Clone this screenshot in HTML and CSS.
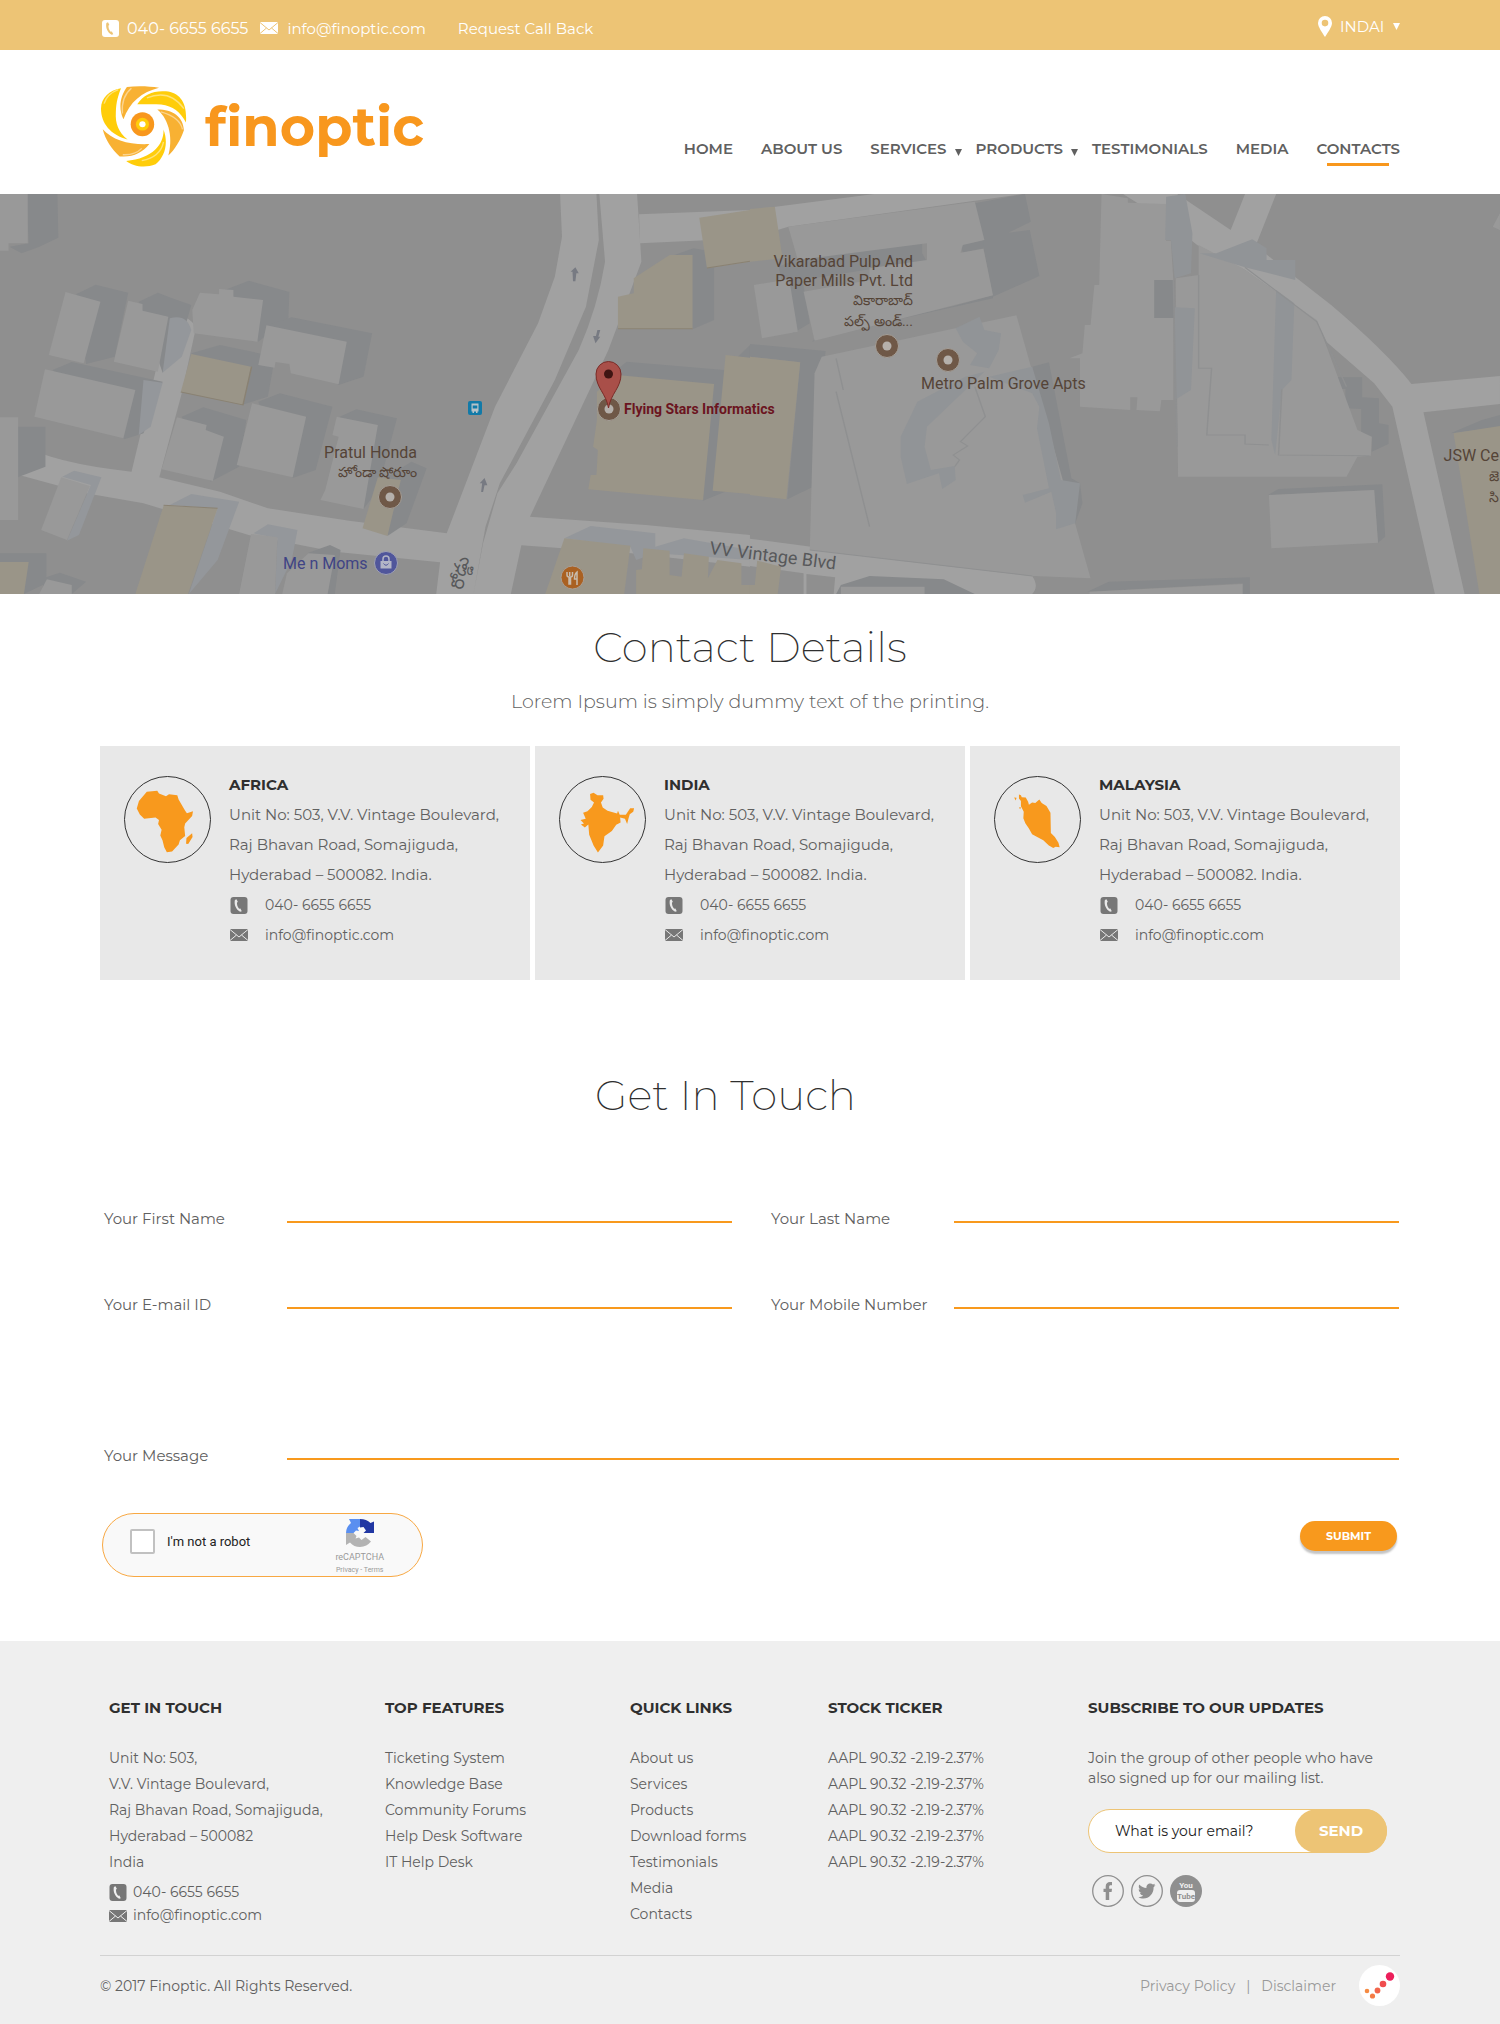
FILE: index.html
```html
<!DOCTYPE html>
<html lang="en">
<head>
<meta charset="utf-8">
<meta name="viewport" content="width=device-width, initial-scale=1">
<title>Finoptic - Contacts</title>
<link rel="stylesheet" href="styles.css">
</head>
<body>
<svg class="sprite" aria-hidden="true">
  <symbol id="phone" viewBox="0 0 17 17">
    <rect width="17" height="17" rx="3" fill="currentColor"/>
    <path d="M6 2.200 4.400 3.100C3.300 7.500 5.600 13 9.600 14.800L11.300 14.200 9.900 11.400 8.600 11.700C7 10 6.300 7.600 6.500 5.500L7.400 5Z" class="cut"/>
  </symbol>
  <symbol id="mail" viewBox="0 0 18 12" preserveAspectRatio="none">
    <rect width="18" height="12" fill="currentColor"/>
    <path d="M0 .5 9 8 18 .5M0 11.500 6.500 6M18 11.500 11.500 6" fill="none" class="cut-line"/>
  </symbol>
</svg>

<div class="topbar">
  <div class="wrap topbar-row">
    <a class="top-link phone" href="tel:04066556655"><svg class="ico-phone"><use href="#phone"/></svg>040- 6655 6655</a>
    <a class="top-link mail" href="mailto:info@finoptic.com"><svg class="ico-mail"><use href="#mail"/></svg>info@finoptic.com</a>
    <a class="top-link callback" href="#form">Request Call Back</a>
    <label class="region">
      <svg class="ico-pin" viewBox="0 0 14 21" aria-hidden="true"><path fill="#fff" fill-rule="evenodd" d="M7 0a7 7 0 0 1 7 7c0 4-4 9-7 14C4 16 0 11 0 7a7 7 0 0 1 7-7Zm0 3.800a3.300 3.300 0 1 0 0 6.600 3.300 3.300 0 0 0 0-6.600Z"/></svg>
      <select aria-label="Region"><option>INDAI</option></select>
      <svg class="caret" viewBox="0 0 7 7" aria-hidden="true"><path d="M0 0h7L3.500 7Z" fill="currentColor"/></svg>
    </label>
  </div>
</div>

<header class="wrap header">
  <a class="brand" href="#">
    <svg class="brand-mark" viewBox="62 257 249 244" preserveAspectRatio="none" aria-hidden="true">
      <g fill="#ffcd0a">
        <path d="M120 264C85 271 63 292 62 325C62 370 90 405 139 418C112 395 103 370 105 335C106 305 112 285 120 264Z"/>
        <path d="M167 312C185 282 215 270 250 273C290 278 312 305 308 367C292 335 270 318 236 313C210 311 190 313 167 312Z"/>
        <path d="M243 388C245 430 215 475 135 483C155 500 190 505 220 493C247 470 258 430 243 388Z"/>
      </g>
      <g fill="#f8b133">
        <path d="M137 260C165 256 200 257 230 262C180 275 145 305 127 357C110 320 120 285 137 260Z"/>
        <path d="M225 328C270 328 300 350 302 390C292 420 275 450 257 466C270 420 262 360 225 328Z"/>
        <path d="M67 387C95 420 145 435 202 432C180 460 155 472 116 469C92 445 75 420 67 387Z"/>
      </g>
      <g fill="none" stroke="#fff" stroke-opacity=".45" stroke-width="4">
        <path d="M71 310Q80 280 112 268M124 340Q120 290 150 264M195 293Q260 265 302 325M235 335Q290 350 298 388M125 464Q160 466 180 445M180 482Q235 470 243 425"/>
      </g>
      <ellipse cx="182" cy="372" rx="34" ry="36" fill="#f8971d"/>
      <ellipse cx="182" cy="372" rx="19" ry="19" fill="#ffcd0a"/>
      <ellipse cx="182" cy="372" rx="9" ry="9" fill="#fff"/>
    </svg>
    <span class="brand-name">finoptic</span>
  </a>
  <nav class="nav">
    <a href="#">HOME</a>
    <a href="#">ABOUT US</a>
    <a href="#" class="has-menu">SERVICES<svg class="caret" viewBox="0 0 7 7"><path d="M0 0h7L3.500 7Z" fill="currentColor"/></svg></a>
    <a href="#" class="has-menu">PRODUCTS<svg class="caret" viewBox="0 0 7 7"><path d="M0 0h7L3.500 7Z" fill="currentColor"/></svg></a>
    <a href="#">TESTIMONIALS</a>
    <a href="#">MEDIA</a>
    <a href="#" class="active">CONTACTS</a>
  </nav>
</header>

<svg class="map" viewBox="0 0 1500 400" preserveAspectRatio="xMidYMid slice" role="img" aria-label="Map of the office location">
  <rect width="1500" height="400" fill="#8f8f8f"/>
  <g transform="scale(.4783 .3333) translate(0 -12)">
    <g fill="#a1a1a1">
      <path d="M1171 12H1332L1341 215L1272 480L1108 980L1350 1005L1568 1035V1130L1320 1090L1090 1066L1068 1212H912L920 1117L700 1085L520 1035L300 940L180 910L40 855V760Q110 820 275 845L325 545L355 400Q380 355 410 410L380 610L333 862L460 905L560 955L730 992L934 1030L1035 650L1125 400L1160 260L1175 140Z"/>
      <path d="M1336 73L1568 60V145L1338 160Z"/>
    </g>
    <path d="M1247 12H1253L1265 215Q1250 350 1210 480L1080 820L1040 910L1010 1060L990 1212L1015 1010L1045 880L1160 570L1225 350L1252 150Z" fill="#8f8f8f"/>
    <g fill="#87898b">
      <path d="M55 12H120L122 143L80 172L45 190L20 170L60 160Z"/>
      <path d="M160 312L200 284L268 308L240 500L180 522Z"/>
      <path d="M290 335L330 308L360 325L400 345L375 470L340 548Z"/>
      <path d="M470 300L520 272L605 306L603 385L540 455Z"/>
      <path d="M560 405L610 382L778 430L760 560L708 585Z"/>
      <path d="M110 540L150 516L340 575L300 730L260 748Z"/>
      <path d="M400 490L460 465L575 500L560 620L505 645Z"/>
      <path d="M540 635L585 610L695 650L660 840L612 864Z"/>
      <path d="M380 680L425 652L515 690L500 830L440 875Z"/>
      <path d="M710 680L745 658L830 685L790 900L760 957Z"/>
      <path d="M810 860L860 815L892 835L850 1000L810 1038Z"/>
      <path d="M1285 545L1310 515L1515 540L1568 465V540L1525 900L1470 932Z"/>
      <path d="M1410 195L1450 175L1493 185V390L1448 418Z"/>
      <path d="M0 1090H97V1180L50 1212H0ZM90 1165L125 1148L180 1175L150 1212H90Z"/>
      <path d="M645 1088L690 1065L712 1080L700 1212H650Z"/>
      <path d="M0 710H95V830L40 860L0 890Z"/>
    </g>
    <g fill="#94979b">
      <path d="M130 860L155 842L212 862L165 1035L140 1052L190 885Z"/>
      <path d="M355 945L400 912L500 935L455 1110L395 1212L455 955Z"/>
      <path d="M530 1030L560 1003L622 1020L610 1110L575 1212L580 1045Z"/>
      <path d="M1180 1045L1235 1008L1370 1030V1070L1430 1045L1568 1080V1110L1370 1090L1330 1110L1318 1070Z"/>
      <path d="M355 385Q390 370 400 420L380 500L340 548Z"/>
      <path d="M300 570L340 578L315 710L290 735Z"/>
    </g>
    <g fill="#999">
      <path d="M0 12H58V160H18V182H0ZM0 682H38V990H0Z"/>
      <path d="M137 306L210 335L175 520L102 495Z"/>
      <path d="M268 332L298 342V362L352 380L330 545L238 515Z"/>
      <path d="M418 308L458 313V297L488 300V320L550 330L538 455L405 430L402 360Z"/>
      <path d="M557 406L725 455L708 583L608 550L605 522L576 516L574 533L540 525Z"/>
      <path d="M94 538L283 600L258 745L72 680Z"/>
      <path d="M370 682L432 705L430 720L468 740L445 873L338 838Z"/>
      <path d="M527 640L640 680L612 862L495 825Z"/>
      <path d="M704 680L790 705L760 957L670 930L680 900L708 740L695 735Z"/>
      <path d="M128 862L188 888L140 1050L86 1020Z"/>
      <path d="M525 1032L580 1042L575 1212H500Z"/>
      <path d="M645 1090L700 1095L685 1212H590L600 1150Z"/>
      <path d="M98 1168L150 1185V1212H82Z"/>
    </g>
    <g fill="#9a9588">
      <path d="M400 492L525 530L508 645L378 605Z"/>
      <path d="M342 947L455 955L393 1212H283Z"/>
      <path d="M790 862L838 870L810 1038L758 1015Z"/>
      <path d="M0 1116H60L50 1212H0Z"/>
      <path d="M1400 195H1448V417H1292V320L1325 310V265Z"/>
      <path d="M1462 83L1568 60V215L1478 235Z"/>
      <path d="M1290 555L1493 582L1470 930L1230 898L1235 855H1247L1250 780L1240 770L1248 690V605Z"/>
      <path d="M1517 495L1568 503V912L1490 902Z"/>
      <path d="M1180 1045L1318 1067L1305 1212H1140Z"/>
      <path d="M1345 1075L1400 1082V1155L1425 1160L1430 1090L1482 1100L1480 1165L1500 1110L1550 1120V1185H1568V1212H1330V1140L1342 1138Z"/>
    </g>
    <path d="M1292 416H1448M1478 234L1568 214M378 606L508 645L526 530M342 946L455 955" fill="none" stroke="#8a8273" stroke-width="3"/>
    <g fill="#777a82">
      <path d="M1198 274L1197 245H1193L1203 232L1210 250H1205L1203 274Z"/>
      <path d="M1249 420L1246 438H1240L1245 460L1255 440H1251L1255 420Z"/>
      <path d="M1006 906L1008 880H1003L1013 864L1019 886H1013L1010 906Z"/>
    </g>
  </g>
  <g transform="translate(750) scale(.4783 .3333) translate(0 -12)">
    <g fill="#a1a1a1">
      <path d="M0 60L260 12H570L80 110L0 145Z"/>
      <path d="M780 12H893L1005 120L1035 12H1100L1057 168L1215 345Q1330 485 1383 582L1568 558V642L1408 667L1494 1212H1432L1343 650L1305 580L1205 455L1185 395L1035 240L935 165L877 100Z"/>
      <path d="M0 1046L590 1158Q605 1190 590 1212H175L178 1162L118 1152V1212H112V1150L0 1128Z"/>
    </g>
    <g fill="#87898b">
      <path d="M470 40L575 12L587 95L540 128L585 120L605 258L508 320Z"/>
      <path d="M60 230L110 200L360 160V190L370 215L240 240L110 270L125 400L90 430Z"/>
      <path d="M440 165L488 150V175L445 188Z"/>
      <path d="M130 455L140 440L420 350L508 316V325L180 430Z"/>
      <path d="M0 462L158 483L130 892L78 928L105 517L0 500Z"/>
      <path d="M843 270H887V384H843Z"/>
      <path d="M1465 730L1530 690L1568 675V710Z"/>
      <path d="M1083 915L1105 897L1322 883L1328 1040L1313 1058L1305 900Z"/>
      <path d="M1112 598L1150 562H1280V622L1315 625V700L1335 705V762L1300 785V740L1278 738V657L1245 655V597Z"/>
      <path d="M180 1212L190 1185L250 1158L405 1168L470 1212ZM705 1205L750 1175L1045 1162V1212H1030V1180Z"/>
      <path d="M590 530L625 517L672 865L690 880L695 940L680 1000L640 1018L650 900Z"/>
    </g>
    <g fill="#999">
      <path d="M80 110L470 35L490 150L445 165L440 188L488 176L508 316L135 452L112 305L250 270V235L370 210V160L100 210Z"/>
      <path d="M8 285L82 268L100 425L25 445Z"/>
      <path d="M150 500L557 376L712 1165L580 1157L125 1080L135 550Z"/>
      <path d="M735 12L790 25V38L870 42V152H880L885 270H845V384H885V630H860L857 664L808 660L810 622L795 622V660L690 650V505H668L695 490L700 405H712L720 285H730Z"/>
      <path d="M890 265L938 255V165L1030 235L1185 390L1270 720L1300 740L1298 797L1270 800L1247 860H895Z"/>
      <path d="M1085 915L1305 900L1313 1058L1090 1075Z"/>
      <path d="M710 1205L1030 1182V1212H710ZM190 1190H365V1212H190ZM1568 70L1553 110L1568 120Z"/>
    </g>
    <g fill="#919497">
      <path d="M870 20L910 12L925 130L922 250L888 265L880 150H868Z"/>
      <path d="M888 352L930 355L922 600L888 630Z"/>
      <path d="M975 190L1050 148L1080 175V210H1140V270L1035 232L940 190Z"/>
      <path d="M1100 300L1138 340L1132 570L1112 600L1098 795L1090 750Z"/>
      <path d="M430 415L480 380L490 420L525 430L520 480L500 535L460 525L475 490L445 455Z"/>
      <path d="M350 635L450 560L490 545L370 710L365 770L378 840L428 828L430 870L402 897L395 850L328 882L315 800V740Z"/>
      <path d="M500 560L590 530L625 700L650 870L690 880L680 1000L640 1018V970L630 905L575 938L570 915L625 895L600 715L605 650L590 610Z"/>
    </g>
    <g fill="none" stroke="#8f9091" stroke-width="3">
      <path d="M180 505L195 600M180 605L250 1010M470 590L492 680L440 755L455 768L425 795L438 810L428 830M125 1080L590 1158"/>
      <path d="M885 270L893 770M938 255V535H965L955 735H1035V762L1085 765M1112 598L1105 795L1295 797M1035 232L1185 395L1247 590"/>
    </g>
    <g fill="#9a9588">
      <path d="M0 57L52 50L68 205L0 215ZM0 500L105 517L76 928L0 915Z"/>
      <path d="M1471 730L1568 708V1212H1525Z"/>
      <path d="M15 1112L65 1130L58 1212H0V1185H10Z"/>
    </g>
  </g>
  <g class="poi">
    <g fill="#6f5847" stroke="#a59f98" stroke-width="1">
      <circle cx="887" cy="152" r="11.500"/><circle cx="948" cy="166" r="11.500"/><circle cx="390" cy="303" r="11.500"/><circle cx="609" cy="215" r="11.500"/>
    </g>
    <g fill="#b5b0ab"><circle cx="887" cy="152" r="4.500"/><circle cx="948" cy="166" r="4.500"/><circle cx="390" cy="303" r="4.500"/><circle cx="609" cy="215" r="4.500"/></g>
    <path d="M608.500 214C606 199 596 194 596 180A12.500 12.500 0 0 1 621 180C621 194 611 199 608.500 214Z" fill="#a94f49" stroke="#7a2b27"/>
    <circle cx="608.500" cy="180" r="4.500" fill="#3f1513"/>
    <g transform="translate(468 207)"><rect width="14" height="14" rx="2" fill="#127aa8"/><path d="M3.500 2.500h7v8h-1v1.500h-1.500V10.500h-2V12H4.500V10.500h-1Z" fill="#b9c3c8"/><path d="M4.700 4.500h4.600v3h-4.600Z" fill="#127aa8"/></g>
    <g transform="translate(0 -6)">
      <circle cx="386" cy="375" r="11.500" fill="#50569b" stroke="#a1a3b3"/>
      <path d="M380.500 373h11v7.500h-11Z" fill="#b3b5c6"/><path d="M383 373v-2a3 3 0 0 1 6 0v2" fill="none" stroke="#b3b5c6" stroke-width="1.500"/><path d="M383.500 375.500q2.500 3.500 5 0" fill="none" stroke="#50569b"/>
    </g>
    <g transform="translate(0 -6)">
      <circle cx="572.500" cy="389.500" r="11.500" fill="#aa6122" stroke="#a8a098"/>
      <path d="M567 384v3q0 2 2 2v7h1.500v-7q2 0 2-2v-3M569.700 384v4M577 397v-13q-2.500 2-2.500 7H577" fill="none" stroke="#c8bcae" stroke-width="1.500"/>
    </g>
  </g>
  <g class="map-text">
    <g text-anchor="end">
      <text x="913" y="73">Vikarabad Pulp And</text>
      <text x="913" y="92">Paper Mills Pvt. Ltd</text>
      <text x="913" y="111" class="te">వికారాబాద్</text>
      <text x="913" y="132" class="te">పల్ప్ అండ్...</text>
      <text x="417" y="264">Pratul Honda</text>
      <text x="417" y="283" class="te">హోండా షోరూం</text>
      <text x="1499" y="267">JSW Ce</text>
      <text x="1499" y="287" class="te">జె</text>
      <text x="1499" y="308" class="te">సి</text>
    </g>
    <text x="921" y="195">Metro Palm Grove Apts</text>
    <text x="624" y="220" class="here">Flying Stars Informatics</text>
    <text x="283" y="375" class="shop">Me n Moms</text>
    <text x="709" y="360" class="road" transform="rotate(7 709 360)">VV Vintage Blvd</text>
    <text x="463" y="396" class="road" transform="rotate(-80 463 396)">రోడ్డు</text>
  </g>
</svg>

<main>
  <section class="wrap details">
    <h1 class="title">Contact Details</h1>
    <p class="lead">Lorem Ipsum is simply dummy text of the printing.</p>
    <div class="cards">
      <article class="card">
        <svg class="country" viewBox="74 528 195 261" preserveAspectRatio="none" aria-hidden="true"><path fill="#f8991d" d="M124 573L148 570L152 579L168 587L175 581L194 584L197 597L212 632L216 639L230 633L228 648L212 671L210 682L212 709L200 722L197 735L182 757L170 759L164 744L160 722L155 708L158 690L150 672L152 660L144 652L118 656L108 643L101 625L106 602ZM228 701L229 712L219 734L214 733L215 715Z"/></svg>
        <div class="card-body">
          <h2>AFRICA</h2>
          <p>Unit No: 503, V.V. Vintage Boulevard,<br>Raj Bhavan Road, Somajiguda,<br>Hyderabad – 500082. India.</p>
          <a href="tel:04066556655"><svg class="ico-phone"><use href="#phone"/></svg>040- 6655 6655</a>
          <a href="mailto:info@finoptic.com"><svg class="ico-mail"><use href="#mail"/></svg>info@finoptic.com</a>
        </div>
      </article>
      <article class="card">
        <svg class="country" viewBox="1051 528 195 261" preserveAspectRatio="none" aria-hidden="true"><path fill="#f8991d" d="M1120 580L1128 576L1137 584L1150 584L1151 595L1145 606L1149 622L1160 632L1182 640L1184 632L1188 644L1202 644L1212 624L1221 624L1219 635L1211 642L1208 656L1205 672L1200 656L1189 652L1190 668L1180 675L1170 694L1153 710L1150 738L1138 760L1128 738L1118 705L1116 674L1108 683L1099 674L1106 671L1098 660L1110 656L1104 638L1114 633L1124 620L1129 606L1121 598Z"/></svg>
        <div class="card-body">
          <h2>INDIA</h2>
          <p>Unit No: 503, V.V. Vintage Boulevard,<br>Raj Bhavan Road, Somajiguda,<br>Hyderabad – 500082. India.</p>
          <a href="tel:04066556655"><svg class="ico-phone"><use href="#phone"/></svg>040- 6655 6655</a>
          <a href="mailto:info@finoptic.com"><svg class="ico-mail"><use href="#mail"/></svg>info@finoptic.com</a>
        </div>
      </article>
      <article class="card">
        <svg class="country" viewBox="529 528 213 261" preserveAspectRatio="none" aria-hidden="true"><path fill="#f8991d" d="M589 582L594 584L596 590L606 591L612 604L614 613L622 606L630 608L640 597L646 608L658 617L668 638L669 700L679 712L688 730L691 744L681 742L675 746L664 738L650 722L637 714L622 704L614 686L605 670L600 655L601 635L594 618L594 602L589 594ZM577 591L583 592L581 600ZM589 622L594 621L592 627Z"/></svg>
        <div class="card-body">
          <h2>MALAYSIA</h2>
          <p>Unit No: 503, V.V. Vintage Boulevard,<br>Raj Bhavan Road, Somajiguda,<br>Hyderabad – 500082. India.</p>
          <a href="tel:04066556655"><svg class="ico-phone"><use href="#phone"/></svg>040- 6655 6655</a>
          <a href="mailto:info@finoptic.com"><svg class="ico-mail"><use href="#mail"/></svg>info@finoptic.com</a>
        </div>
      </article>
    </div>
  </section>

  <section class="wrap touch">
    <h2 class="title title-offset">Get In Touch</h2>
    <form id="form" class="form">
      <div class="fields">
        <div class="field"><label for="first">Your First Name</label><input id="first" type="text"></div>
        <div class="field"><label for="last">Your Last Name</label><input id="last" type="text"></div>
        <div class="field"><label for="email">Your E-mail ID</label><input id="email" type="email"></div>
        <div class="field"><label for="mobile">Your Mobile Number</label><input id="mobile" type="tel"></div>
        <div class="field field-wide"><label for="message">Your Message</label><textarea id="message"></textarea></div>
      </div>
      <div class="form-end">
        <div class="captcha">
          <label class="robot"><input type="checkbox">I'm not a robot</label>
          <div class="captcha-brand">
            <svg class="captcha-logo" viewBox="0 0 28 28" aria-hidden="true">
              <path fill="#5a8ff0" d="M3 0H14V7.500L11.500 9 13 12 10 11.500 7.500 14H0Q0 8 5 4Z"/>
              <path fill="#2137a3" d="M14 0Q20.500 0 24.500 4L28 2.500V14H17.500L20 11.500 17.500 8 14 8.500Z"/>
              <path fill="#b3b3b3" d="M0 14H7.500L10.500 17 9.500 19.500 13 18.500 15.500 21 19.500 18 25 22.500Q21 27.500 14 28Q8 28 4 23.500L0 26Z"/>
            </svg>
            <span class="captcha-name">reCAPTCHA</span>
            <span class="captcha-links"><a href="#">Privacy</a> - <a href="#">Terms</a></span>
          </div>
        </div>
        <button class="submit" type="submit">SUBMIT</button>
      </div>
    </form>
  </section>
</main>

<footer class="footer">
  <div class="wrap">
    <div class="footer-cols">
      <section>
        <h2>GET IN TOUCH</h2>
        <address>Unit No: 503,<br>V.V. Vintage Boulevard,<br>Raj Bhavan Road, Somajiguda,<br>Hyderabad – 500082<br>India</address>
        <div class="reach">
          <a href="tel:04066556655"><svg class="ico-phone"><use href="#phone"/></svg>040- 6655 6655</a>
          <a href="mailto:info@finoptic.com"><svg class="ico-mail"><use href="#mail"/></svg>info@finoptic.com</a>
        </div>
      </section>
      <section>
        <h2>TOP FEATURES</h2>
        <ul>
          <li><a href="#">Ticketing System</a></li>
          <li><a href="#">Knowledge Base</a></li>
          <li><a href="#">Community Forums</a></li>
          <li><a href="#">Help Desk Software</a></li>
          <li><a href="#">IT Help Desk</a></li>
        </ul>
      </section>
      <section>
        <h2>QUICK LINKS</h2>
        <ul>
          <li><a href="#">About us</a></li>
          <li><a href="#">Services</a></li>
          <li><a href="#">Products</a></li>
          <li><a href="#">Download forms</a></li>
          <li><a href="#">Testimonials</a></li>
          <li><a href="#">Media</a></li>
          <li><a href="#">Contacts</a></li>
        </ul>
      </section>
      <section>
        <h2>STOCK TICKER</h2>
        <ul>
          <li>AAPL 90.32 -2.19-2.37%</li>
          <li>AAPL 90.32 -2.19-2.37%</li>
          <li>AAPL 90.32 -2.19-2.37%</li>
          <li>AAPL 90.32 -2.19-2.37%</li>
          <li>AAPL 90.32 -2.19-2.37%</li>
        </ul>
      </section>
      <section>
        <h2>SUBSCRIBE TO OUR UPDATES</h2>
        <p class="join">Join the group of other people who have<br>also signed up for our mailing list.</p>
        <form class="subscribe">
          <input type="email" aria-label="Email" placeholder="What is your email?">
          <button type="submit">SEND</button>
        </form>
        <div class="social">
          <a href="#" aria-label="Facebook"><svg viewBox="0 0 32 32"><circle cx="16" cy="16" r="15.300" fill="none" stroke="#8f8f8f" stroke-width="1.300"/><path d="M13.700 25V17H11.500V13.800H13.700V11.500C13.700 8.500 15.500 7 18 7H20V10.200H18.700C17.600 10.200 17.200 10.700 17.200 11.700V13.800H20L19.600 17H17.200V25Z" fill="#8f8f8f"/></svg></a>
          <a href="#" aria-label="Twitter"><svg viewBox="0 0 32 32"><circle cx="16" cy="16" r="15.300" fill="none" stroke="#8f8f8f" stroke-width="1.300"/><path d="M24.500 10.300 22.600 12.300C22.800 19 18 23.500 12.500 23.500 10.500 23.500 8.700 23 7.500 22 9.300 22 11 21.500 12.200 20.500 10.600 20.400 9.400 19.400 9 18H10.500C8.800 17.500 7.700 16 7.700 14.200L9.300 14.600C7.700 13.500 7.300 11.300 8.300 9.500 10.200 11.700 12.800 13 15.500 13.100 15 10.600 17 8.500 19.300 8.500 20.300 8.500 21.200 8.900 21.900 9.600L24.100 8.800 22.900 10.600Z" fill="#8f8f8f"/></svg></a>
          <a href="#" aria-label="YouTube"><svg viewBox="0 0 32 32"><circle cx="16" cy="16" r="16" fill="#8f8f8f"/><rect x="7" y="15" width="18" height="12" rx="3" fill="#efefef"/><text x="16" y="13" text-anchor="middle" class="yt" fill="#efefef">You</text><text x="16" y="24" text-anchor="middle" class="yt" fill="#8f8f8f">Tube</text></svg></a>
        </div>
      </section>
    </div>
    <div class="legal">
      <span class="copy">© 2017 Finoptic. All Rights Reserved.</span>
      <span class="legal-links"><a href="#">Privacy Policy</a><span>|</span><a href="#">Disclaimer</a></span>
      <svg class="badge" viewBox="0 0 41 41" aria-hidden="true"><circle cx="20.500" cy="20.500" r="20.500" fill="#fff"/><circle cx="8" cy="26" r="2.300" fill="#f58a42"/><circle cx="13.500" cy="31" r="2.600" fill="#f47c45"/><circle cx="18.500" cy="25.500" r="2.900" fill="#f2654b"/><circle cx="24" cy="19" r="3.300" fill="#f04d4f"/><circle cx="31" cy="11.500" r="4.200" fill="#ec1f5b"/></svg>
    </div>
  </div>
</footer>
</body>
</html>
```
FILE: styles.css
```css
* { box-sizing: border-box; }

body {
  margin: 0;
  background: #fff;
  color: #606060;
  font-family: Montserrat, Inter, "Open Sans", sans-serif;
  font-size: 15px;
}

a { color: inherit; text-decoration: none; }
h1, h2, p, ul { margin: 0; padding: 0; }
ul { list-style: none; }
button, input, select, textarea { font: inherit; color: inherit; margin: 0; }

.sprite { position: absolute; width: 0; height: 0; }
.wrap { max-width: 1332px; margin: 0 auto; padding: 0 16px; }

.ico-phone { width: 17px; height: 17px; flex: none; }
.ico-mail { width: 18px; height: 12px; flex: none; }
.caret { width: 7px; height: 7px; flex: none; }
.cut { fill: var(--cut); }
.cut-line { stroke: var(--cut); stroke-width: 1; }

/* Top bar */
.topbar { --cut: #edc475; background: #edc475; color: #fff; }
.topbar-row { display: flex; align-items: center; height: 50px; padding: 6px 16px 0 18px; }
.top-link { display: flex; align-items: center; gap: 9px; }
.phone { gap: 8px; font-size: 16px; }
.mail { margin-left: 12px; }
.callback { margin-left: 32px; }
.region { display: flex; align-items: center; gap: 8px; margin-left: auto; padding-bottom: 4px; }
.region select { appearance: none; border: 0; padding: 0; background: none; }
.ico-pin { width: 14px; height: 21px; }

/* Header */
.header { display: flex; justify-content: space-between; height: 144px; }
.brand { display: flex; gap: 18px; padding: 36px 0 0 1px; }
.brand-mark { width: 86px; height: 81px; }
.brand-name { color: #f8971d; font-size: 54px; font-weight: 700; line-height: 82px; }
.nav { display: flex; gap: 28px; padding-top: 87px; font-size: 15px; font-weight: 600; line-height: 24px; }
.has-menu { display: flex; gap: 8px; margin-right: -14px; }
.has-menu .caret { margin-top: 12px; }
.active::after { content: ""; display: block; width: 62px; height: 3px; margin: 2px auto 0; background: #f8971d; }

/* Map */
.map { display: block; width: 100%; height: 400px; overflow: hidden; }
.map-text { font-family: Roboto, sans-serif; font-size: 16px; fill: #554437; }
.te { font-size: 14px; }
.here { font-size: 14px; font-weight: 700; fill: #6b1420; }
.shop { fill: #3f4485; }
.road { font-size: 18px; fill: #57585a; }

/* Contact details */
.title { color: #2f2f2f; font-size: 42px; font-weight: 200; line-height: 56px; text-align: center; }
.details { padding-top: 25px; }
.lead { margin-top: 12px; font-size: 19px; font-weight: 300; line-height: 30px; text-align: center; }
.cards { display: grid; grid-template-columns: repeat(3, 1fr); gap: 5px; margin-top: 29px; }
.card { --cut: #e8e8e8; display: flex; gap: 18px; padding: 24px 8px 30px 24px; background: #e8e8e8; }
.country { flex: none; width: 87px; height: 87px; margin-top: 6px; border: 1px solid #333; border-radius: 50%; }
.card-body { line-height: 30px; font-size: 15px; }
.card h2 { color: #2f2f2f; font-size: 15px; font-weight: 700; }
.card a { display: flex; align-items: center; gap: 17px; font-size: 14px; }
.card a svg { margin-left: 1px; width: 18px; color: #777; }

/* Form */
.touch { padding-top: 87px; padding-bottom: 64px; }
.title-offset { width: 310px; margin: 0 auto; text-align: left; white-space: nowrap; }
.form { margin-top: 72px; }
.fields { display: grid; grid-template-columns: 1fr 1fr; gap: 50px 39px; padding: 0 1px 0 4px; }
.field { display: flex; align-items: flex-end; font-size: 15px; line-height: 24px; }
.field label { flex: none; width: 183px; }
.field input, .field textarea { flex: 1; min-width: 0; height: 28px; margin-bottom: 8px; padding: 0; border: 0; border-bottom: 2px solid #f8991d; border-radius: 0; background: none; outline: 0; resize: none; }
.field textarea { height: 93px; }
.field-wide { grid-column: 1 / -1; }
.form-end { display: flex; justify-content: space-between; align-items: flex-start; margin-top: 45px; padding: 0 3px 0 2px; }
.captcha { display: flex; justify-content: space-between; width: 321px; height: 64px; padding: 0 38px 0 27px; border: 1px solid #f8a843; border-radius: 32px; background: #f9f9f9; font-family: Roboto, sans-serif; }
.robot { display: flex; align-items: center; gap: 12px; height: 54px; color: #222; font-size: 13px; }
.robot input { appearance: none; width: 25px; height: 25px; border: 2px solid #c1c1c1; border-radius: 2px; background: #fff; }
.captcha-brand { display: flex; flex-direction: column; align-items: center; padding-top: 5px; color: #999; }
.captcha-logo { width: 28px; height: 28px; }
.captcha-name { margin-top: 3px; font-size: 9px; line-height: 14px; }
.captcha-links { font-size: 7px; line-height: 12px; }
.submit { width: 97px; height: 30px; margin-top: 8px; padding: 0; border: 0; border-radius: 15px; background: #f8991d; box-shadow: 0 3px 2px #c4c4c4; color: #fff; font-size: 11px; font-weight: 700; }

/* Footer */
.footer { --cut: #efefef; padding-top: 55px; background: #efefef; font-size: 14px; }
.footer-cols { display: grid; grid-template-columns: 276fr 245fr 198fr 260fr 312fr; padding: 0 0 28px 9px; line-height: 26px; }
.footer h2 { margin-bottom: 25px; color: #2f2f2f; font-size: 15px; font-weight: 700; line-height: 24px; }
address { font-style: normal; }
.reach { display: grid; padding-top: 6px; line-height: 23px; }
.reach a { display: flex; align-items: center; gap: 6px; }
.reach svg { width: 18px; color: #777; }
.join { padding-top: 3px; line-height: 20px; }
.subscribe { display: flex; width: 299px; height: 44px; margin-top: 21px; border: 1px solid #edc475; border-radius: 22px; background: #fff; color: #222; }
.subscribe input { flex: 1; min-width: 0; padding: 0 0 0 26px; border: 0; background: none; outline: 0; }
.subscribe input::placeholder { color: #222; opacity: 1; }
.subscribe button { width: 92px; margin: -1px; padding: 0; border: 0; border-radius: 22px; background: #edc475; color: #fff; font-size: 15px; font-weight: 700; }
.social { display: flex; gap: 7px; margin: 22px 0 0 4px; }
.social svg { display: block; width: 32px; height: 32px; }
.yt { font-family: "Liberation Sans Narrow", Roboto, sans-serif; font-size: 8px; font-weight: 700; }
.legal { display: flex; align-items: center; padding: 9px 0 18px; border-top: 1px solid #d2d2d2; }
.legal-links { display: flex; gap: 11px; margin-left: auto; color: #999; }
.badge { width: 41px; height: 41px; margin-left: 23px; }

@media (max-width: 1100px) {
  .header { flex-direction: column; height: auto; padding-bottom: 24px; }
  .nav { flex-wrap: wrap; padding-top: 24px; }
  .cards, .fields { grid-template-columns: 1fr; }
  .footer-cols { grid-template-columns: 1fr 1fr; gap: 32px; }
}
```
